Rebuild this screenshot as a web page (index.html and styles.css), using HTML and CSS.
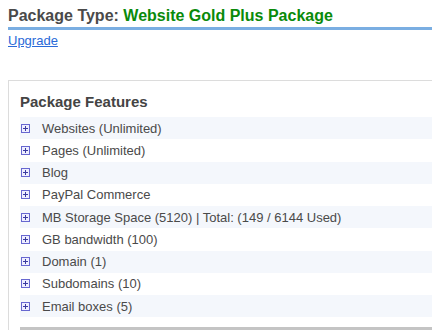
FILE: index.html
```html
<!DOCTYPE html>
<html lang="en">
<head>
  <meta charset="UTF-8">
  <meta name="viewport" content="width=device-width, initial-scale=1.0">
  <title>Package</title>
  <link rel="stylesheet" href="styles.css">
</head>
<body>

<div class="page">
  <!-- Header -->
  <h1 class="package-title">Package Type: <span class="package-name">Website Gold Plus Package</span></h1>
  <a href="#" class="upgrade-link">Upgrade</a>

  <!-- Features box -->
  <div class="features-box">
    <h2>Package Features</h2>
    <ul class="feature-list">
      <li class="alt"><span class="plus-icon"></span>Websites (Unlimited)</li>
      <li><span class="plus-icon"></span>Pages (Unlimited)</li>
      <li class="alt"><span class="plus-icon"></span>Blog</li>
      <li><span class="plus-icon"></span>PayPal Commerce</li>
      <li class="alt"><span class="plus-icon"></span>MB Storage Space (5120) | Total: (149 / 6144 Used)</li>
      <li><span class="plus-icon"></span>GB bandwidth (100)</li>
      <li class="alt"><span class="plus-icon"></span>Domain (1)</li>
      <li><span class="plus-icon"></span>Subdomains (10)</li>
      <li class="alt"><span class="plus-icon"></span>Email boxes (5)</li>
    </ul>
    <div class="box-footer"></div>
  </div>
</div>

</body>
</html>
```

FILE: styles.css
```css
body {
  font-family: "Liberation Sans", Arial, sans-serif;
  margin: 0;
  padding: 0;
  background-color: #fff;
  color: #444;
  overflow: hidden;
}

.page {
  padding: 6px 0 0 8px;
}

.package-title {
  font-size: 16px;
  font-weight: bold;
  color: #4a4a4a;
  margin: 0;
  padding-bottom: 2px;
  line-height: 19px;
  border-bottom: 3px solid #7aaee2;
}

.package-name {
  color: #0a8a0a;
}

.upgrade-link {
  display: inline-block;
  margin-top: 3px;
  font-size: 13px;
  color: #2a6ad8;
}

.features-box {
  margin-top: 31px;
  border-top: 1px solid #dcdcdc;
  border-left: 1px solid #dcdcdc;
  padding: 12px 0 0 11px;
}

.features-box h2 {
  font-size: 15px;
  font-weight: bold;
  color: #444;
  margin: 0 0 6px 0;
  line-height: 18px;
}

.feature-list {
  list-style: none;
  margin: 0;
  padding: 0;
}

.feature-list li {
  display: flex;
  align-items: center;
  height: 22.28px;
  font-size: 13px;
  color: #4a4a4a;
}

.feature-list li.alt {
  background-color: #f4f7fc;
}

/* Small expand box */
.plus-icon {
  position: relative;
  width: 7px;
  height: 7px;
  margin: 0 12px 0 1px;
  border: 1px solid #6767d0;
  background-color: #eeeeff;
}

.plus-icon::before,
.plus-icon::after {
  content: "";
  position: absolute;
  background-color: #3a3aa0;
}

.plus-icon::before {
  left: 1px;
  top: 3px;
  width: 5px;
  height: 1px;
}

.plus-icon::after {
  left: 3px;
  top: 1px;
  width: 1px;
  height: 5px;
}

.box-footer {
  margin-top: 10px;
  border-top: 3px solid #c4c4c4;
}
```
